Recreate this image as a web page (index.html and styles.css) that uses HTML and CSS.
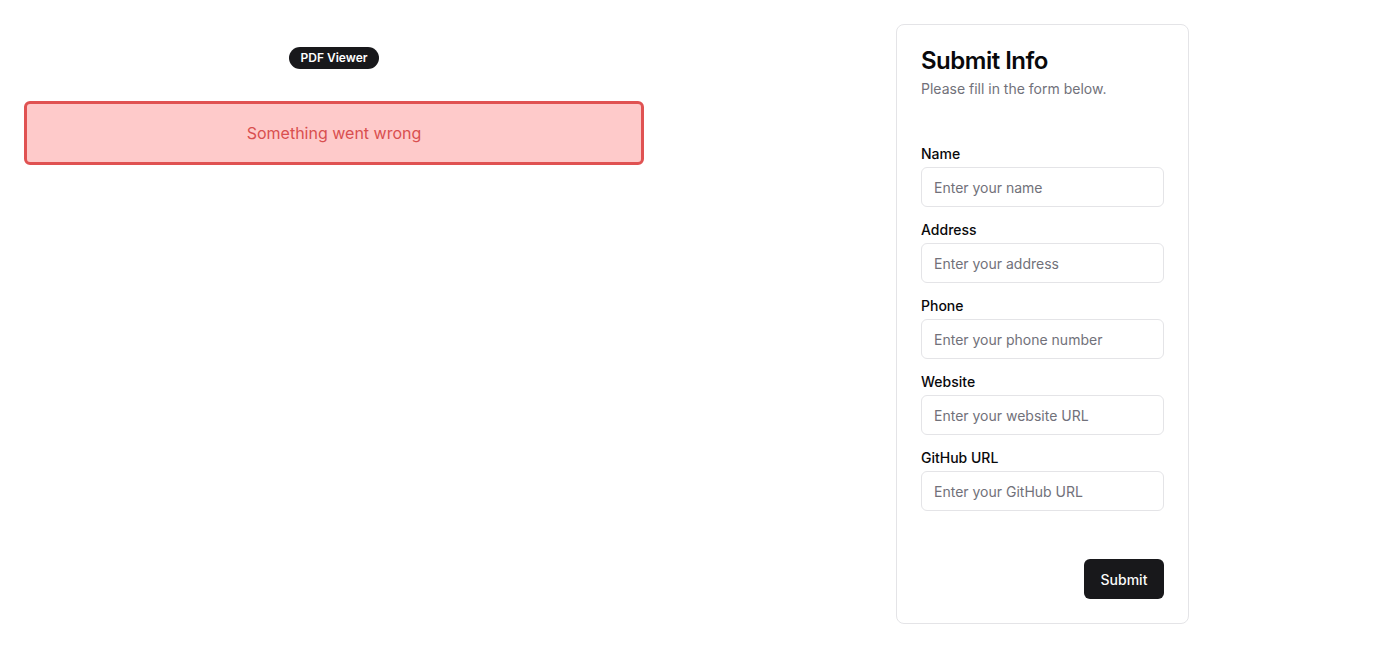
FILE: index.html
```html
<!DOCTYPE html>
<html>
<head>
<meta charset="utf-8">
<link rel="stylesheet" href="styles.css">
</head>
<body>
<div class="page">
  <section class="viewer">
    <span class="badge">PDF Viewer</span>
    <div class="error">Something went wrong</div>
  </section>
  <section class="card">
    <div class="card-header">
      <h1 class="title">Submit Info</h1>
      <p class="subtitle">Please fill in the form below.</p>
    </div>
    <form class="form">
      <div class="field">
        <label class="label">Name</label>
        <input class="input" placeholder="Enter your name">
      </div>
      <div class="field">
        <label class="label">Address</label>
        <input class="input" placeholder="Enter your address">
      </div>
      <div class="field">
        <label class="label">Phone</label>
        <input class="input" placeholder="Enter your phone number">
      </div>
      <div class="field">
        <label class="label">Website</label>
        <input class="input" placeholder="Enter your website URL">
      </div>
      <div class="field">
        <label class="label">GitHub URL</label>
        <input class="input" placeholder="Enter your GitHub URL">
      </div>
      <div class="actions">
        <button type="button" class="button">Submit</button>
      </div>
    </form>
  </section>
</div>
</body>
</html>
```
FILE: styles.css
```css
* { box-sizing: border-box; }
html, body { margin: 0; padding: 0; background: #fff; }
body { font-family: Inter, "Noto Sans", sans-serif; color: #09090b; }
.page {
  display: flex;
  align-items: flex-start;
  padding: 24px 0 0 24px;
}
.viewer {
  width: 620px;
  display: flex;
  flex-direction: column;
  align-items: center;
  padding-top: 23px;
}
.badge {
  display: inline-block;
  background: #18181b;
  color: #fff;
  font-family: Inter, sans-serif;
  font-weight: 600;
  font-size: 12px;
  line-height: 16px;
  padding: 3px 11px;
  border-radius: 11px;
}
.error {
  margin-top: 32px;
  width: 620px;
  height: 64px;
  background: #fecaca;
  border: 3px solid #e05252;
  border-radius: 6px;
  display: flex;
  align-items: center;
  justify-content: center;
  color: #d94f4f;
  font-family: Inter, sans-serif;
  font-size: 16px;
}
.card {
  margin-left: 252px;
  width: 293px;
  height: 600px;
  border: 1px solid #e4e4e7;
  border-radius: 8px;
  padding: 24px 24px;
  display: flex;
  flex-direction: column;
}
.card-header { display: flex; flex-direction: column; gap: 6px; }
.title {
  margin: 0;
  font-size: 24px;
  font-weight: 600;
  line-height: 24px;
  letter-spacing: -0.5px;
  color: #09090b;
}
.subtitle {
  margin: 0;
  font-size: 14px;
  line-height: 20px;
  color: #71717a;
}
.form {
  margin-top: 45px;
  display: flex;
  flex-direction: column;
  gap: 13px;
  flex: 1;
}
.field { display: flex; flex-direction: column; gap: 3px; }
.label {
  font-size: 14px;
  font-weight: 500;
  line-height: 20px;
  color: #09090b;
}
.input {
  width: 243px;
  height: 40px;
  border: 1px solid #e4e4e7;
  border-radius: 6px;
  padding: 0 12px;
  font-family: Inter, sans-serif;
  font-size: 14px;
  color: #09090b;
  background: #fff;
  outline: none;
}
.input::placeholder { color: #71717a; }
.actions {
  margin-top: auto;
  display: flex;
  justify-content: flex-end;
}
.button {
  width: 80px;
  height: 40px;
  background: #18181b;
  color: #fafafa;
  border: none;
  border-radius: 6px;
  font-family: Inter, sans-serif;
  font-size: 14px;
  font-weight: 500;
}
```
